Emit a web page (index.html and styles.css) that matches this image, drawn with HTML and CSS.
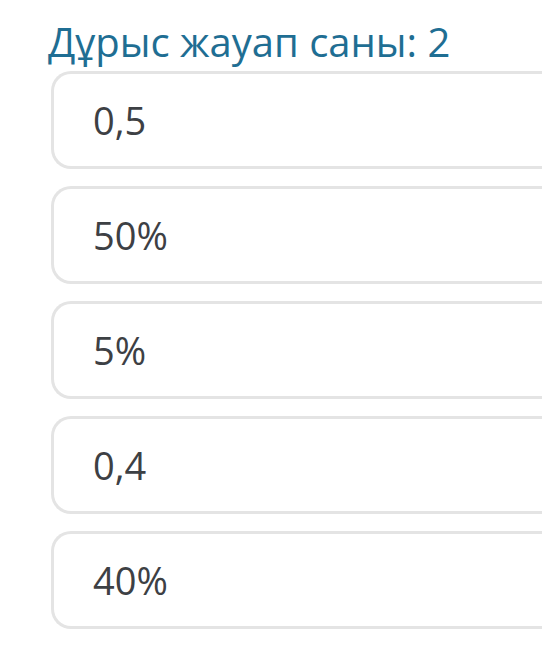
FILE: index.html
```html
<!DOCTYPE html>
<html lang="kk">
<head>
  <meta charset="UTF-8">
  <meta name="viewport" content="width=device-width, initial-scale=1.0">
  <title>Сұрақ</title>
  <link rel="stylesheet" href="styles.css">
</head>
<body>
<div class="question">
  <div class="question-title">Дұрыс жауап саны: 2</div>
  <div class="answers">
    <div class="answer">0,5</div>
    <div class="answer">50%</div>
    <div class="answer">5%</div>
    <div class="answer">0,4</div>
    <div class="answer">40%</div>
  </div>
</div>
</body>
</html>
```

FILE: styles.css
```css
html, body {
  height: 100%;
  margin: 0;
}
body {
  font-family: "Open Sans", "Noto Sans", sans-serif;
  background: #fff;
  overflow: hidden;
}
.question {
  padding: 18px 0 0 48px;
}
.question-title {
  font-size: 40px;
  line-height: 48px;
  color: #1f6e93;
  margin-bottom: 5px;
  white-space: nowrap;
}
.answers {
  display: flex;
  flex-direction: column;
  gap: 17px;
  padding-left: 3px;
}
/* карточка уходит за правый край экрана */
.answer {
  box-sizing: border-box;
  height: 98px;
  display: flex;
  align-items: center;
  padding-left: 39px;
  border: 3px solid #e4e4e4;
  border-right: none;
  border-radius: 20px 0 0 20px;
  font-size: 38px;
  color: #3d4044;
}
```
